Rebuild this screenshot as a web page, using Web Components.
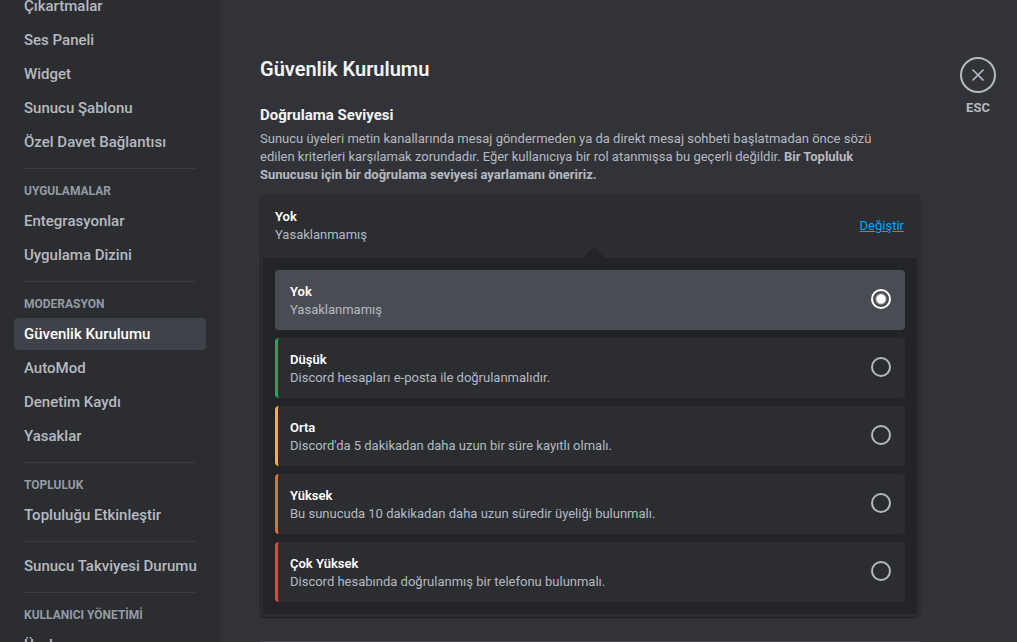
<!DOCTYPE html>
<html lang="tr">
<head>
<meta charset="utf-8">
<meta name="viewport" content="width=device-width, initial-scale=1">
<title>Güvenlik Kurulumu</title>
<style>
  :root {
    --bg-primary: #313338;
    --bg-secondary: #2b2d31;
    --bg-tertiary: #232428;
    --bg-selected: #404249;
    --bg-option-selected: #4a4c53;
    --divider: #3b3d43;
    --text-strong: #f2f3f5;
    --text-normal: #b5bac1;
    --text-muted: #949ba4;
    --link: #00a8fc;
  }
  body {
    margin: 0;
    background: var(--bg-primary);
    color: var(--text-normal);
    font-family: Roboto, "Noto Sans", sans-serif;
    font-size: 13px;
    line-height: 18px;
  }
</style>
</head>
<body>

<settings-layout>
  <nav slot="sidebar" aria-label="Sunucu ayarları">
    <nav-section>
      <nav-item>Çıkartmalar</nav-item>
      <nav-item>Ses Paneli</nav-item>
      <nav-item>Widget</nav-item>
      <nav-item>Sunucu Şablonu</nav-item>
      <nav-item>Özel Davet Bağlantısı</nav-item>
    </nav-section>
    <nav-section heading="UYGULAMALAR">
      <nav-item>Entegrasyonlar</nav-item>
      <nav-item>Uygulama Dizini</nav-item>
    </nav-section>
    <nav-section heading="MODERASYON">
      <nav-item selected>Güvenlik Kurulumu</nav-item>
      <nav-item>AutoMod</nav-item>
      <nav-item>Denetim Kaydı</nav-item>
      <nav-item>Yasaklar</nav-item>
    </nav-section>
    <nav-section heading="TOPLULUK">
      <nav-item>Topluluğu Etkinleştir</nav-item>
    </nav-section>
    <nav-section>
      <nav-item>Sunucu Takviyesi Durumu</nav-item>
    </nav-section>
    <nav-section heading="KULLANICI YÖNETİMİ">
      <nav-item>Üyeler</nav-item>
    </nav-section>
  </nav>

  <setting-page heading="Güvenlik Kurulumu">
    <setting-block heading="Doğrulama Seviyesi">
      <span slot="description">Sunucu üyeleri metin kanallarında mesaj göndermeden ya da direkt mesaj sohbeti başlatmadan önce sözü edilen kriterleri karşılamak zorundadır. Eğer kullanıcıya bir rol atanmışsa bu geçerli değildir. <strong>Bir Topluluk Sunucusu için bir doğrulama seviyesi ayarlamanı öneririz.</strong></span>
      <level-picker></level-picker>
    </setting-block>
  </setting-page>

  <close-button slot="tools"></close-button>
</settings-layout>

<script>
  class BaseElement extends HTMLElement {
    constructor() {
      super();
      this.attachShadow({ mode: "open" });
    }
    connectedCallback() {
      this.shadowRoot.innerHTML =
        "<style>*, *::before, *::after { box-sizing: border-box; }</style>" + this.render();
    }
  }

  customElements.define("settings-layout", class extends BaseElement {
    render() {
      return `
        <style>
          :host { display: flex; height: 100vh; overflow: hidden; }
          aside, .content { overflow: auto; scrollbar-width: none; }
          aside { flex: 0 0 220px; background: var(--bg-secondary); padding: 0 14px; }
          ::slotted(nav) { display: block; margin-top: -10px; }
          .content { flex: 1; display: flex; align-items: flex-start; background: var(--bg-primary); }
          main { flex: 0 1 740px; min-width: 0; padding: 57px 40px 0; }
          .tools { flex: 0 0 57px; padding-top: 57px; }
        </style>
        <aside><slot name="sidebar"></slot></aside>
        <div class="content">
          <main><slot></slot></main>
          <div class="tools"><slot name="tools"></slot></div>
        </div>`;
    }
  });

  customElements.define("nav-section", class extends BaseElement {
    render() {
      const heading = this.getAttribute("heading");
      return `
        <style>
          :host { display: flow-root; }
          :host(:not(:first-of-type))::before {
            content: ""; display: block; height: 1px; margin: 8px 10px; background: var(--divider);
          }
          h3 { margin: 0; padding: 6px 10px; font-size: 12px; line-height: 16px; font-weight: 700; color: var(--text-muted); }
        </style>
        ${heading ? `<h3>${heading}</h3>` : ""}
        <slot></slot>`;
    }
  });

  customElements.define("nav-item", class extends BaseElement {
    render() {
      return `
        <style>
          :host { display: block; margin-bottom: 2px; }
          a {
            display: block; padding: 6px 10px; border-radius: 4px;
            font-size: 15px; line-height: 20px; font-weight: 500; white-space: nowrap;
            color: var(--text-normal); text-decoration: none;
          }
          :host([selected]) a { background: var(--bg-selected); color: #fff; }
        </style>
        <a href="#"${this.hasAttribute("selected") ? ' aria-current="page"' : ""}><slot></slot></a>`;
    }
  });

  customElements.define("setting-page", class extends BaseElement {
    render() {
      return `
        <style>
          :host { display: block; }
          h1 { margin: 0 0 24px; font-size: 20px; line-height: 24px; font-weight: 600; color: var(--text-strong); }
          hr { margin: 24px 0; border: 0; height: 1px; background: #46474e; }
        </style>
        <h1>${this.getAttribute("heading")}</h1>
        <slot></slot>
        <hr>`;
    }
  });

  customElements.define("setting-block", class extends BaseElement {
    render() {
      return `
        <style>
          :host { display: flow-root; }
          h2 { margin: 0 0 5px; font-size: 15px; line-height: 20px; font-weight: 700; color: var(--text-strong); }
          p { margin: 0 0 11px; max-width: 640px; color: var(--text-normal); }
        </style>
        <h2>${this.getAttribute("heading")}</h2>
        <p><slot name="description"></slot></p>
        <slot></slot>`;
    }
  });

  const LEVELS = [
    { id: "none", name: "Yok", note: "Yasaklanmamış", color: "transparent", checked: true },
    { id: "low", name: "Düşük", note: "Discord hesapları e-posta ile doğrulanmalıdır.", color: "#23a55a" },
    { id: "medium", name: "Orta", note: "Discord'da 5 dakikadan daha uzun bir süre kayıtlı olmalı.", color: "#f0b232" },
    { id: "high", name: "Yüksek", note: "Bu sunucuda 10 dakikadan daha uzun süredir üyeliği bulunmalı.", color: "#dc7528" },
    { id: "highest", name: "Çok Yüksek", note: "Discord hesabında doğrulanmış bir telefonu bulunmalı.", color: "#f23f43" }
  ];

  customElements.define("level-picker", class extends BaseElement {
    render() {
      const options = LEVELS.map(level => `
        <label for="${level.id}" style="--level: ${level.color}">
          <span class="text"><b>${level.name}</b><span>${level.note}</span></span>
          <input type="radio" name="level" id="${level.id}" value="${level.id}"${level.checked ? " checked" : ""}>
        </label>`).join("");
      return `
        <style>
          :host {
            display: block; margin-bottom: 1px; border-radius: 5px; background: var(--bg-secondary);
            box-shadow: 0 0 0 1px var(--bg-secondary), 0 2px 0 0 #1d1e21;
          }
          .current { display: flex; align-items: center; justify-content: space-between; padding: 13px 16px 14px 15px; }
          .text { display: flex; flex-direction: column; min-width: 0; }
          b { font-weight: 600; color: #fff; }
          a { color: var(--link); text-decoration: underline; }
          .panel {
            position: relative; display: flex; flex-direction: column; gap: 8px;
            margin: 0 3px; padding: 12px; background: var(--bg-tertiary);
          }
          .panel::before {
            content: ""; position: absolute; bottom: 100%; left: calc(50% - 7px);
            border: 11px solid transparent; border-top: 0; border-bottom-color: var(--bg-tertiary);
          }
          label {
            display: flex; align-items: center; justify-content: space-between; gap: 12px;
            padding: 0 14px 0 12px; border-left: 3px solid var(--level); border-radius: 4px;
            background: var(--bg-secondary); cursor: pointer;
          }
          label .text { padding: 13px 0 11px; }
          label:has(:checked) { background: var(--bg-option-selected); border-left-color: transparent; }
          input {
            appearance: none; flex: none; width: 20px; height: 20px; margin: 0 0 2px;
            border: 2px solid var(--text-normal); border-radius: 50%;
          }
          input:checked { border-color: #fff; background: radial-gradient(circle, #fff 4px, transparent 6px); }
          .foot { height: 2px; }
        </style>
        <div class="current">
          <span class="text"><b>Yok</b><span>Yasaklanmamış</span></span>
          <a href="#">Değiştir</a>
        </div>
        <div class="panel" role="radiogroup" aria-label="Doğrulama Seviyesi">${options}</div>
        <div class="foot"></div>`;
    }
  });

  customElements.define("close-button", class extends BaseElement {
    render() {
      return `
        <style>
          :host { display: block; width: 36px; text-align: center; }
          button {
            display: flex; flex-direction: column; align-items: center; gap: 6px; width: 100%;
            padding: 0; border: 0; background: none; cursor: pointer;
            font: 700 13px/18px Roboto, "Noto Sans", sans-serif; color: var(--text-normal);
          }
          .ring {
            display: flex; align-items: center; justify-content: center;
            width: 36px; height: 36px; border: 2px solid var(--text-normal); border-radius: 50%;
          }
        </style>
        <button type="button">
          <span class="ring">
            <svg width="18" height="18" viewBox="0 0 18 18" aria-hidden="true">
              <path d="M3.5 3.5 14.5 14.5M14.5 3.5 3.5 14.5" stroke="currentColor" stroke-width="1.7" fill="none"/>
            </svg>
          </span>
          ESC
        </button>`;
    }
  });
</script>
</body>
</html>
